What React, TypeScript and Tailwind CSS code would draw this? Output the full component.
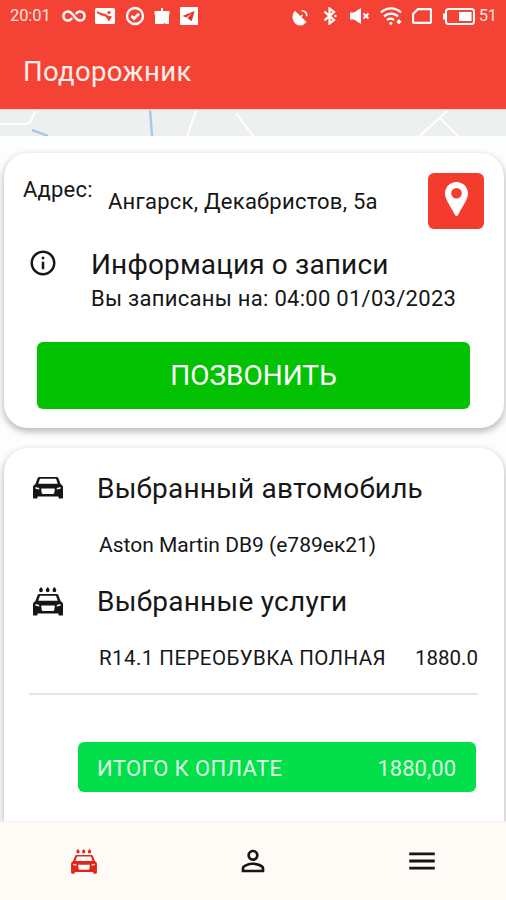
import { MdInfoOutline, MdMenu, MdPersonOutline } from 'react-icons/md';

type CarProps = {
  wash?: boolean;
  className?: string;
};

function CarIcon({ wash = false, className = '' }: CarProps) {
  return (
    <svg viewBox="0 0 30 29" className={className} fill="currentColor">
      {wash && (
        <path d="M8 0c1.200 1.500 1.900 2.300 1.900 3.300a1.900 1.900 0 0 1-3.800 0C6.100 2.300 6.800 1.500 8 0zM14.700 0c1.200 1.500 1.900 2.300 1.900 3.300a1.900 1.900 0 0 1-3.800 0c0-1 .7-1.800 1.900-3.300zM21.400 0c1.200 1.500 1.900 2.300 1.900 3.300a1.900 1.900 0 0 1-3.800 0c0-1 .7-1.800 1.900-3.300z" />
      )}
      <path
        fillRule="evenodd"
        d="M6.500 7h17c1 0 1.600.5 1.900 1.300l2.200 5.700 1.500 1.200c.6.500.9 1 .9 1.800v10.400c0 .7-.4 1.200-1.100 1.200h-2.300c-.7 0-1.100-.5-1.100-1.200V26.600H4.500v.8c0 .7-.4 1.200-1.100 1.200H1.100C.4 28.600 0 28.100 0 27.400V17c0-.8.300-1.300.9-1.800L2.400 14l2.200-5.700C4.900 7.500 5.500 7 6.500 7zm.5 1.800L5.200 13.800h19.600L23 8.800zM2.500 17v1.700l3.700.8v-1.400zM27.500 17l-3.700 1.100v1.400l3.700-.8zM9.200 18.400c-.7 0-1.200.5-1 1.200l.6 3.400c.2.700.6 1.100 1.400 1.100h9.600c.8 0 1.200-.4 1.400-1.100l.6-3.400c.2-.7-.3-1.200-1-1.200z"
      />
    </svg>
  );
}

function PinIcon() {
  return (
    <svg viewBox="0 0 23 34" className="h-[34px] w-[23px]" fill="#fff">
      <path
        fillRule="evenodd"
        d="M11.500 0C5.100 0 0 5 0 11.300c0 3 1.100 5.500 2.700 8.700L10.400 33.400c.5.800 1.700.8 2.200 0L20.300 20c1.600-3.200 2.700-5.700 2.700-8.700C23 5 17.900 0 11.500 0zm0 6a5.300 5.300 0 1 1 0 10.600 5.300 5.300 0 0 1 0-10.600z"
      />
    </svg>
  );
}

function StatusBar() {
  return (
    <div className="flex h-8 items-center pl-[10px] pr-[9px] text-[16.500px] tracking-[-0.1px] text-[#ffe3dd]">
      <span className="w-[52px]">20:01</span>
      <svg viewBox="0 0 24 14" className="h-[14px] w-6" fill="none" stroke="#fff" strokeWidth="2.500" strokeLinecap="round">
        <path d="M9.500 9.700C8.500 11 7.300 11.600 6 11.600a4.600 4.600 0 0 1 0-9.200c5.500 0 6.500 9.200 12 9.200a4.600 4.600 0 0 0 0-9.200c-1.300 0-2.500.6-3.500 1.900" />
      </svg>
      <svg viewBox="0 0 20 16" className="ml-[9px] h-4 w-5">
        <rect width="20" height="16" rx="1.500" fill="#fff" />
        <path d="M2 3.200 8 5.500l3 .5 1.500 1.500 4.500 1-3 5-3.500-5-4-1-4.500-2.300z" fill="#f44334" />
        <circle cx="14" cy="4.600" r="1.700" fill="#f44334" />
      </svg>
      <svg viewBox="0 0 20 20" className="ml-[10px] h-5 w-5" fill="none" stroke="#fff">
        <circle cx="10" cy="10" r="8" strokeWidth="2.300" />
        <path d="m6.500 10 2.600 2.600L14 7.800" strokeWidth="2.700" />
      </svg>
      <svg viewBox="0 0 16 17" className="ml-[9px] h-[17px] w-4" fill="#fff">
        <path d="M7 0h2v3h6.500v3.500H.5V3H7zM1 6.500h14V16h-3.500l-1-1.500-1 1.500H1z" />
      </svg>
      <svg viewBox="0 0 18 18" className="ml-[10px] h-[18px] w-[18px]">
        <rect width="18" height="18" rx="1" fill="#fff" />
        <path d="M14.500 4 2.500 9l3.800 1.500L12 6l-4.500 5.300 4.300 3z" fill="#d9382c" />
      </svg>
      <div className="flex-1" />
      <svg viewBox="0 0 17 17" className="mt-[2px] ml-px h-[17px] w-[17px]" fill="none" stroke="#fff" strokeWidth="1.600">
        <path d="M3 3C.5 6 .6 10.500 3.500 13.600s7.500 2.400 10-.6z" fill="#fff" />
        <path d="m8 8.500 2.500-2.500M9.500 1.700c3.300 0 5.300 2.300 5.300 5.500" />
      </svg>
      <svg viewBox="0 0 14 18" className="ml-[14px] h-[18px] w-[14px]" fill="none" stroke="#fff" strokeWidth="2.200">
        <path d="m1.500 4.700 9.500 8.300-4.500 3.500v-15L11 5l-9.500 8.300" />
        <path d="M11.500 9h2" />
      </svg>
      <svg viewBox="0 0 20 18" className="ml-[13px] h-[18px] w-5">
        <path d="M0 5.500h4L11 1v16l-7-4.500H0z" fill="#fff" />
        <path d="m13.500 6.500 5 5m0-5-5 5" stroke="#fff" strokeWidth="1.800" />
      </svg>
      <svg viewBox="0 0 22 18" className="ml-[10px] h-[18px] w-[22px]" fill="none" stroke="#fff" strokeWidth="2.200">
        <path d="M1 5.500a14 14 0 0 1 20 0M4 9.500a10 10 0 0 1 14 0M7 13a6 6 0 0 1 7 0" />
        <circle cx="10.800" cy="16.300" r="1.500" fill="#fff" stroke="none" />
        <path d="M19 12.500v4.500m-2.200-2.300h4.400" strokeWidth="2" />
      </svg>
      <svg viewBox="0 0 20 16" className="ml-[10px] h-4 w-5" fill="none" stroke="#fff" strokeWidth="2.200">
        <path d="M6 1.200h12c.6 0 1 .4 1 1v11.600c0 .6-.4 1-1 1H2c-.6 0-1-.4-1-1V6z" />
      </svg>
      <svg viewBox="0 0 32 17" className="ml-[11px] mr-1 h-[17px] w-8">
        <rect x="3" y="1" width="28" height="15" rx="2.500" fill="none" stroke="#fff" strokeWidth="2" />
        <path d="M0 5.500h2v6H0z" fill="#fff" />
        <path d="M16 4h12.500v9H16z" fill="#fff" />
      </svg>
      <span>51</span>
    </div>
  );
}

function App() {
  return (
    <div className="flex h-[900px] w-[506px] flex-col overflow-hidden bg-[#fdfdfd] font-['Roboto',sans-serif] text-[#161616]">
      <header className="h-[109px] shrink-0 bg-[#f44334]">
        <StatusBar />
        <h1 className="mt-[22px] pl-[23px] text-[27.500px] leading-9 tracking-[0.35px] text-[#ffefeb]">Подорожник</h1>
      </header>

      <svg viewBox="0 0 506 27" className="h-[27px] w-full shrink-0 bg-[#ecf1f0]" fill="none">
        <path d="M0 15h27l4-3 4-10M196 2l-9 25M236 4l17 23M447 2l-27 25M440 9l18 18" stroke="#fff" strokeWidth="2" />
        <path d="m32 21 16 6M150 0l2 27" stroke="#a8c8e8" strokeWidth="2.500" />
        <path d="M0 .8h506" stroke="#fbd9d3" strokeWidth="1.500" />
      </svg>

      <main className="flex min-h-0 flex-1 flex-col gap-5 overflow-hidden pl-1 pr-[2px] pt-[17px]">
        <section className="h-[275px] shrink-0 rounded-[24px] bg-white px-5 pt-5 shadow-[0_3px_6px_1px_rgba(0,0,0,0.25)]">
          <div className="flex h-[56px]">
            <span className="w-[84px] -ml-px mr-px pt-px text-[22px] leading-8 tracking-[0.2px]">Адрес:</span>
            <span className="flex-1 pt-[13px] text-[22px] leading-8 tracking-[0.25px]">Ангарск, Декабристов, 5а</span>
            <button className="flex h-14 w-14 items-center justify-center rounded-md bg-[#f33c2e] pb-1">
              <PinIcon />
            </button>
          </div>
          <div className="mt-[18px] flex">
            <MdInfoOutline className="ml-1 mt-px h-[30px] w-[30px]" />
            <div className="ml-[33px]">
              <h2 className="text-[28px] leading-9 tracking-[0.15px]">Информация о записи</h2>
              <p className="text-[22px] leading-8 tracking-[0.28px]">Вы записаны на: 04:00 01/03/2023</p>
            </div>
          </div>
          <button className="ml-[13px] mt-[27px] h-[67px] w-[433px] rounded-md bg-[#03c203] pt-px text-[28px] text-white">
            ПОЗВОНИТЬ
          </button>
        </section>

        <section className="flex-1 rounded-t-[24px] bg-white pl-[25px] pr-[26px] pt-[23px] shadow-[0_3px_6px_1px_rgba(0,0,0,0.25)]">
          <div className="flex h-9 items-center">
            <CarIcon className="ml-1 mb-[9px] h-[29px] w-[30px]" />
            <h2 className="ml-[34px] text-[28px] leading-9 tracking-[0.2px]">Выбранный автомобиль</h2>
          </div>
          <p className="mt-[22px] pl-[70px] text-[21px] leading-8">Aston Martin DB9 (е789ек21)</p>
          <div className="mt-[23px] flex h-9 items-center">
            <CarIcon wash className="ml-1 mb-px h-[29px] w-[30px]" />
            <h2 className="ml-[34px] text-[28px] leading-9 tracking-[0.25px]">Выбранные услуги</h2>
          </div>
          <div className="mt-[22px] flex h-8 justify-between pl-[70px] text-[20.500px] leading-8">
            <span className="tracking-[0.44px]">R14.1 ПЕРЕОБУВКА ПОЛНАЯ</span>
            <span>1880.0</span>
          </div>
          <div className="mt-[19px] h-0.5 bg-[#e4e4e4]" />
          <div className="ml-[49px] mr-[2px] mt-[47px] flex h-[50px] items-center justify-between rounded-md bg-[#02df4b] pl-[19px] pr-5 pt-[2px] text-[22px] text-[#dcfbe3]">
            <span className="tracking-[0.36px]">ИТОГО К ОПЛАТЕ</span>
            <span>1880,00</span>
          </div>
        </section>
      </main>

      <nav className="z-10 flex h-[79px] shrink-0 border-t border-[#f3f1ee] bg-[#fffbf6]">
        <button className="flex flex-1 items-center justify-center text-[#e3261b]">
          <CarIcon wash className="h-[25px] w-[26px]" />
        </button>
        <button className="flex flex-1 items-center justify-center">
          <MdPersonOutline className="h-[34px] w-[34px]" />
        </button>
        <button className="flex flex-1 items-center justify-center">
          <MdMenu className="h-[34px] w-[34px]" />
        </button>
      </nav>
    </div>
  );
}

export default App;
